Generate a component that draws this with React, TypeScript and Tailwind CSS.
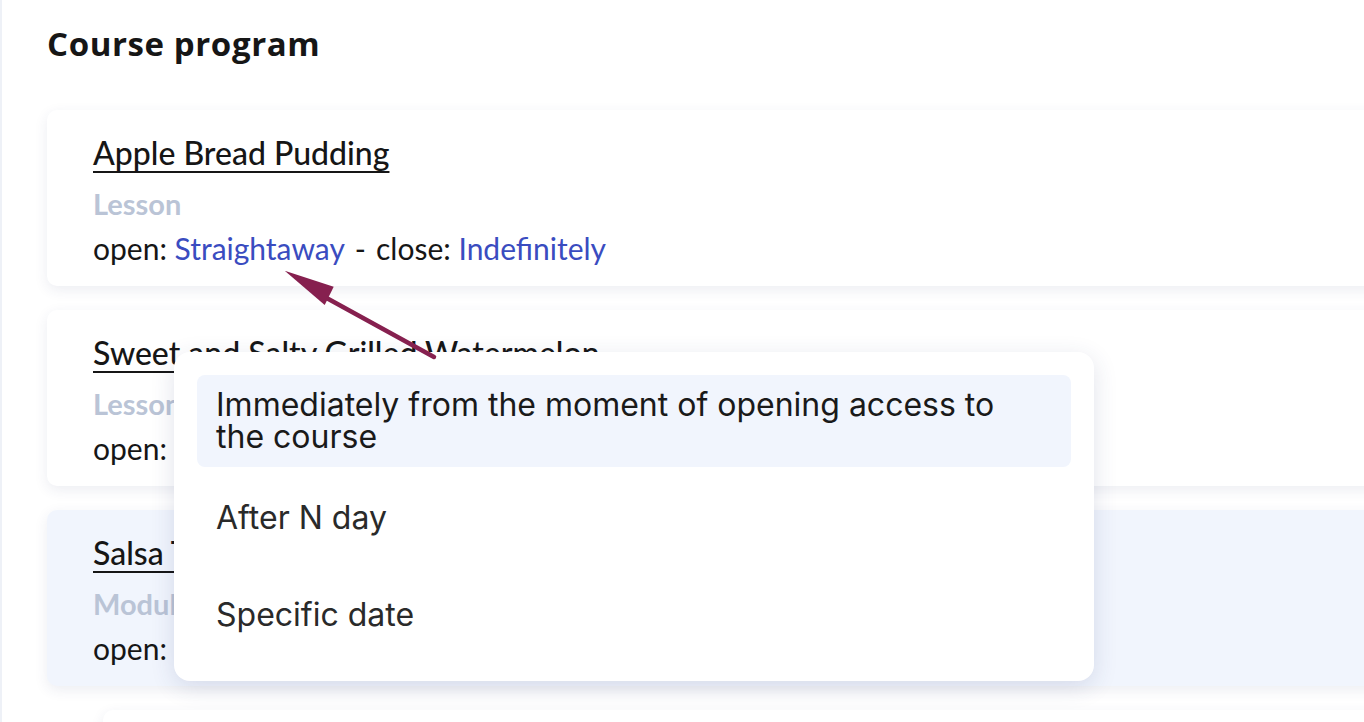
import React from "react";

const lato = { fontFamily: "Lato, 'Noto Sans', sans-serif" };

function Card({
  title,
  kind,
  tinted,
}: {
  title: string;
  kind: string;
  tinted?: boolean;
}) {
  return (
    <div
      className={`w-[1400px] rounded-[10px] pl-[46px] pt-[23px] pb-[18px] shadow-[0_4px_14px_rgba(40,60,110,0.09)] ${
        tinted ? "bg-[#f1f5fd]" : "bg-white"
      }`}
      style={lato}
    >
      <div className="text-[32px] leading-[40px] font-medium text-[#161616]">
        <span className="underline decoration-2 underline-offset-[6px]">{title}</span>
      </div>
      <div className="mt-[11px] text-[29px] leading-[40px] font-bold text-[#bac4d6]">{kind}</div>
      <div className="mt-[4px] text-[30px] leading-[40px] text-[#161616]">
        open: <span className="text-[#3a4cc0]">Straightaway</span>
        <span className="mx-[10px]">-</span>close: <span className="text-[#3a4cc0]">Indefinitely</span>
      </div>
    </div>
  );
}

export default function App() {
  return (
    <div className="relative w-[1364px] h-[722px] overflow-hidden bg-white border-l-2 border-[#eef1f7]">
      <div className="pl-[45px] pt-[24px]">
        <h1
          className="text-[33px] leading-[40px] font-bold text-[#161616] tracking-[0.6px]"
          style={{ fontFamily: "'Open Sans', 'Noto Sans', sans-serif" }}
        >
          Course program
        </h1>
        <div className="mt-[46px] flex flex-col gap-[24px]">
          <Card title="Apple Bread Pudding" kind="Lesson" />
          <Card title="Sweet and Salty Grilled Watermelon" kind="Lesson" />
          <Card title="Salsa Trio" kind="Module" tinted />
          <div className="ml-[56px]">
            <Card title="Mango Salsa" kind="Lesson" />
          </div>
        </div>
      </div>

      {/* dropdown */}
      <div
        className="absolute left-[172px] top-[352px] w-[920px] rounded-[16px] bg-white px-[23px] pt-[23px] pb-[18px] shadow-[0_6px_24px_rgba(40,60,110,0.14)]"
        style={{ fontFamily: "Inter, 'Noto Sans', sans-serif" }}
      >
        <div className="flex flex-col gap-[3px]">
          <div className="rounded-[8px] bg-[#f1f5fd] pl-[19px] pr-[60px] py-[14px] text-[32px] leading-[32px] text-[#1a1a1a]">
            Immediately from the moment of opening access to the course
          </div>
          <div className="px-[19px] py-[32px] text-[32px] leading-[32px] text-[#2a2a2a]">After N day</div>
          <div className="px-[19px] pt-[30px] pb-[32px] text-[32px] leading-[32px] text-[#2a2a2a]">Specific date</div>
        </div>
      </div>

      {/* annotation arrow */}
      <svg className="absolute left-0 top-0 pointer-events-none" width="1364" height="722">
        <line x1="432" y1="357" x2="310" y2="290" stroke="#86204f" strokeWidth="4.5" strokeLinecap="round" />
        <polygon points="282.7,270.7 331.7,286.7 322.7,305" fill="#86204f" />
      </svg>
    </div>
  );
}
